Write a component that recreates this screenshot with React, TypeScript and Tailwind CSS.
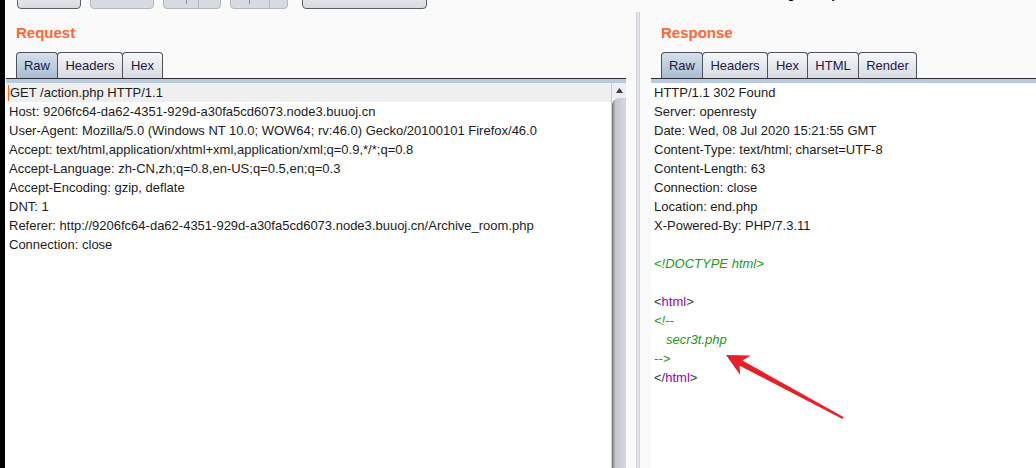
const requestLines = [
  'Host: 9206fc64-da62-4351-929d-a30fa5cd6073.node3.buuoj.cn',
  'User-Agent: Mozilla/5.0 (Windows NT 10.0; WOW64; rv:46.0) Gecko/20100101 Firefox/46.0',
  'Accept: text/html,application/xhtml+xml,application/xml;q=0.9,*/*;q=0.8',
  'Accept-Language: zh-CN,zh;q=0.8,en-US;q=0.5,en;q=0.3',
  'Accept-Encoding: gzip, deflate',
  'DNT: 1',
  'Referer: http://9206fc64-da62-4351-929d-a30fa5cd6073.node3.buuoj.cn/Archive_room.php',
  'Connection: close',
];

const responseHeaders = [
  'HTTP/1.1 302 Found',
  'Server: openresty',
  'Date: Wed, 08 Jul 2020 15:21:55 GMT',
  'Content-Type: text/html; charset=UTF-8',
  'Content-Length: 63',
  'Connection: close',
  'Location: end.php',
  'X-Powered-By: PHP/7.3.11',
];

type Tab = { label: string; w: string };

function Tabs({ tabs }: { tabs: Tab[] }) {
  return (
    <div className="mt-[10px] flex h-[26px] pl-[10px]">
      {tabs.map((t, i) => (
        <div
          key={t.label}
          className={`flex shrink-0 items-center justify-center rounded-t-[4px] border border-b-0 border-[#4f525b] text-[13px] text-[#1b1b45] ${t.w} ${
            i > 0 ? '-ml-px' : ''
          } ${
            i === 0
              ? 'bg-[linear-gradient(#d5e0ea,#a8bdd1)]'
              : 'bg-[linear-gradient(#f6f7f9,#d7dae0)]'
          }`}>
          {t.label}
        </div>
      ))}
    </div>
  );
}

function PanelHead({ title, tabs }: { title: string; tabs: Tab[] }) {
  return (
    <>
      <div className="ml-[10px] mt-[15px] h-[18px] text-[15px] font-bold leading-[18px] text-[#ff6633]">
        {title}
      </div>
      <Tabs tabs={tabs} />
      {/* rule under the tabs */}
      <div className="h-px bg-[#2f313a]" />
      <div className="h-[4px] bg-[#b8cadb]" />
    </>
  );
}

function Line({ children, className = '' }: { children?: React.ReactNode; className?: string }) {
  return <div className={`h-[19px] whitespace-pre leading-[19px] ${className}`}>{children}</div>;
}

function Toolbar() {
  return (
    <div className="flex h-[9px] shrink-0 items-end overflow-hidden">
      <div className="ml-[12px] h-[24px] w-[64px] shrink-0 rounded-b-[4px] border border-[#5b5f69] bg-[linear-gradient(#f8f9fa,#d6d9df)]" />
      <div className="ml-[9px] h-[24px] w-[64px] shrink-0 rounded-b-[4px] border border-[#b3b7bf] bg-[#d6dae1]" />
      <div className="ml-[9px] flex h-[24px] w-[58px] shrink-0 items-end rounded-b-[4px] border border-[#b3b7bf] bg-[#d6dae1]">
        <div className="mb-[4px] ml-[22px] h-[4px] w-px bg-[#8a8e96]" />
        <div className="ml-[11px] h-full w-px bg-[#b3b7bf]" />
      </div>
      <div className="ml-[9px] flex h-[24px] w-[58px] shrink-0 items-end rounded-b-[4px] border border-[#b3b7bf] bg-[#d6dae1]">
        <div className="mb-[4px] ml-[18px] h-[4px] w-px bg-[#8a8e96]" />
        <div className="ml-[19px] h-full w-px bg-[#b3b7bf]" />
      </div>
      <div className="ml-[14px] h-[24px] w-[125px] shrink-0 rounded-b-[4px] border border-[#5b5f69] bg-[linear-gradient(#f8f9fa,#d6d9df)]" />
      {/* target label, scrolled mostly out of view */}
      <span className="-mt-[14px] ml-[341px] shrink-0 self-start whitespace-nowrap text-[13px] font-bold leading-[15px] text-black">
        Target: http://9206fc64-da62-4351-929d-a30fa5cd6073.node3.buuoj.cn
      </span>
    </div>
  );
}

function Tag({ name, close }: { name: string; close?: boolean }) {
  return (
    <>
      <span className="text-[#3c3c3c]">{close ? '</' : '<'}</span>
      <span className="text-[#a000b0]">{name}</span>
      <span className="text-[#3c3c3c]">&gt;</span>
    </>
  );
}

export default function App() {
  return (
    <div className="relative flex h-[468px] w-[1036px] overflow-hidden bg-[#fafafa] font-['Liberation_Sans',Arial,sans-serif] text-[13px] text-[#1c1c1c]">
      <div className="w-[5px] shrink-0 bg-black" />
      <div className="flex min-w-0 flex-1 flex-col">
        <Toolbar />
        <div className="flex min-h-0 flex-1">
          {/* Request */}
          <div className="ml-[1px] flex w-[620px] shrink-0 flex-col">
            <PanelHead
              title="Request"
              tabs={[
                { label: 'Raw', w: 'w-[42px]' },
                { label: 'Headers', w: 'w-[66px]' },
                { label: 'Hex', w: 'w-[41px]' },
              ]}
            />
            <div className="flex min-h-0 flex-1">
              <div className="flex-1 bg-white">
                <div className="flex h-[19px] items-center bg-[#efefef] pl-[2px]">
                  <span className="h-[16px] w-px bg-[#ff6a1a]" />
                  <span className="ml-px whitespace-pre leading-[19px]">GET /action.php HTTP/1.1</span>
                </div>
                {requestLines.map((l) => (
                  <Line key={l} className="pl-[3px]">
                    {l}
                  </Line>
                ))}
              </div>
              {/* scrollbar */}
              <div className="flex w-[15px] flex-col border-l border-[#c8cbd2]">
                <div className="flex h-[15px] items-center justify-center bg-[#eceef2]">
                  <svg width="7" height="5" viewBox="0 0 7 5">
                    <path d="M3.5 0 L7 5 L0 5 Z" fill="#3a3c42" />
                  </svg>
                </div>
                <div className="flex-1 rounded-tl-[7px] bg-[linear-gradient(to_right,#74777e,#c4c7ce_25%,#d5d8de)]" />
              </div>
            </div>
          </div>

          {/* splitter */}
          <div className="w-[25px] shrink-0 pl-[10px] pt-[3px]">
            <div className="h-full w-[4px] border-x border-[#d2d5dc] bg-[#e1e3e8]" />
          </div>

          {/* Response */}
          <div className="flex min-w-0 flex-1 flex-col">
            <PanelHead
              title="Response"
              tabs={[
                { label: 'Raw', w: 'w-[42px]' },
                { label: 'Headers', w: 'w-[66px]' },
                { label: 'Hex', w: 'w-[41px]' },
                { label: 'HTML', w: 'w-[52px]' },
                { label: 'Render', w: 'w-[59px]' },
              ]}
            />
            <div className="flex-1 bg-white pl-[3px]">
              {responseHeaders.map((l) => (
                <Line key={l}>{l}</Line>
              ))}
              <Line />
              <Line className="italic text-[#229922]">{'<!DOCTYPE html>'}</Line>
              <Line />
              <Line>
                <Tag name="html" />
              </Line>
              <Line className="italic text-[#229922]">{'<!--'}</Line>
              <Line className="pl-[12px] italic text-[#229922]">secr3t.php</Line>
              <Line className="italic text-[#229922]">{'-->'}</Line>
              <Line>
                <Tag name="html" close />
              </Line>
            </div>
          </div>
        </div>
      </div>

      {/* red annotation arrow */}
      <svg className="pointer-events-none absolute left-0 top-0" width="1036" height="468" viewBox="0 0 1036 468">
        <polygon
          points="726,355 750.6,355.6 742.4,360.5 843.5,417.1 842.5,418.9 739.6,365.7 740.2,375.1"
          fill="#e8202a"
        />
      </svg>
    </div>
  );
}
